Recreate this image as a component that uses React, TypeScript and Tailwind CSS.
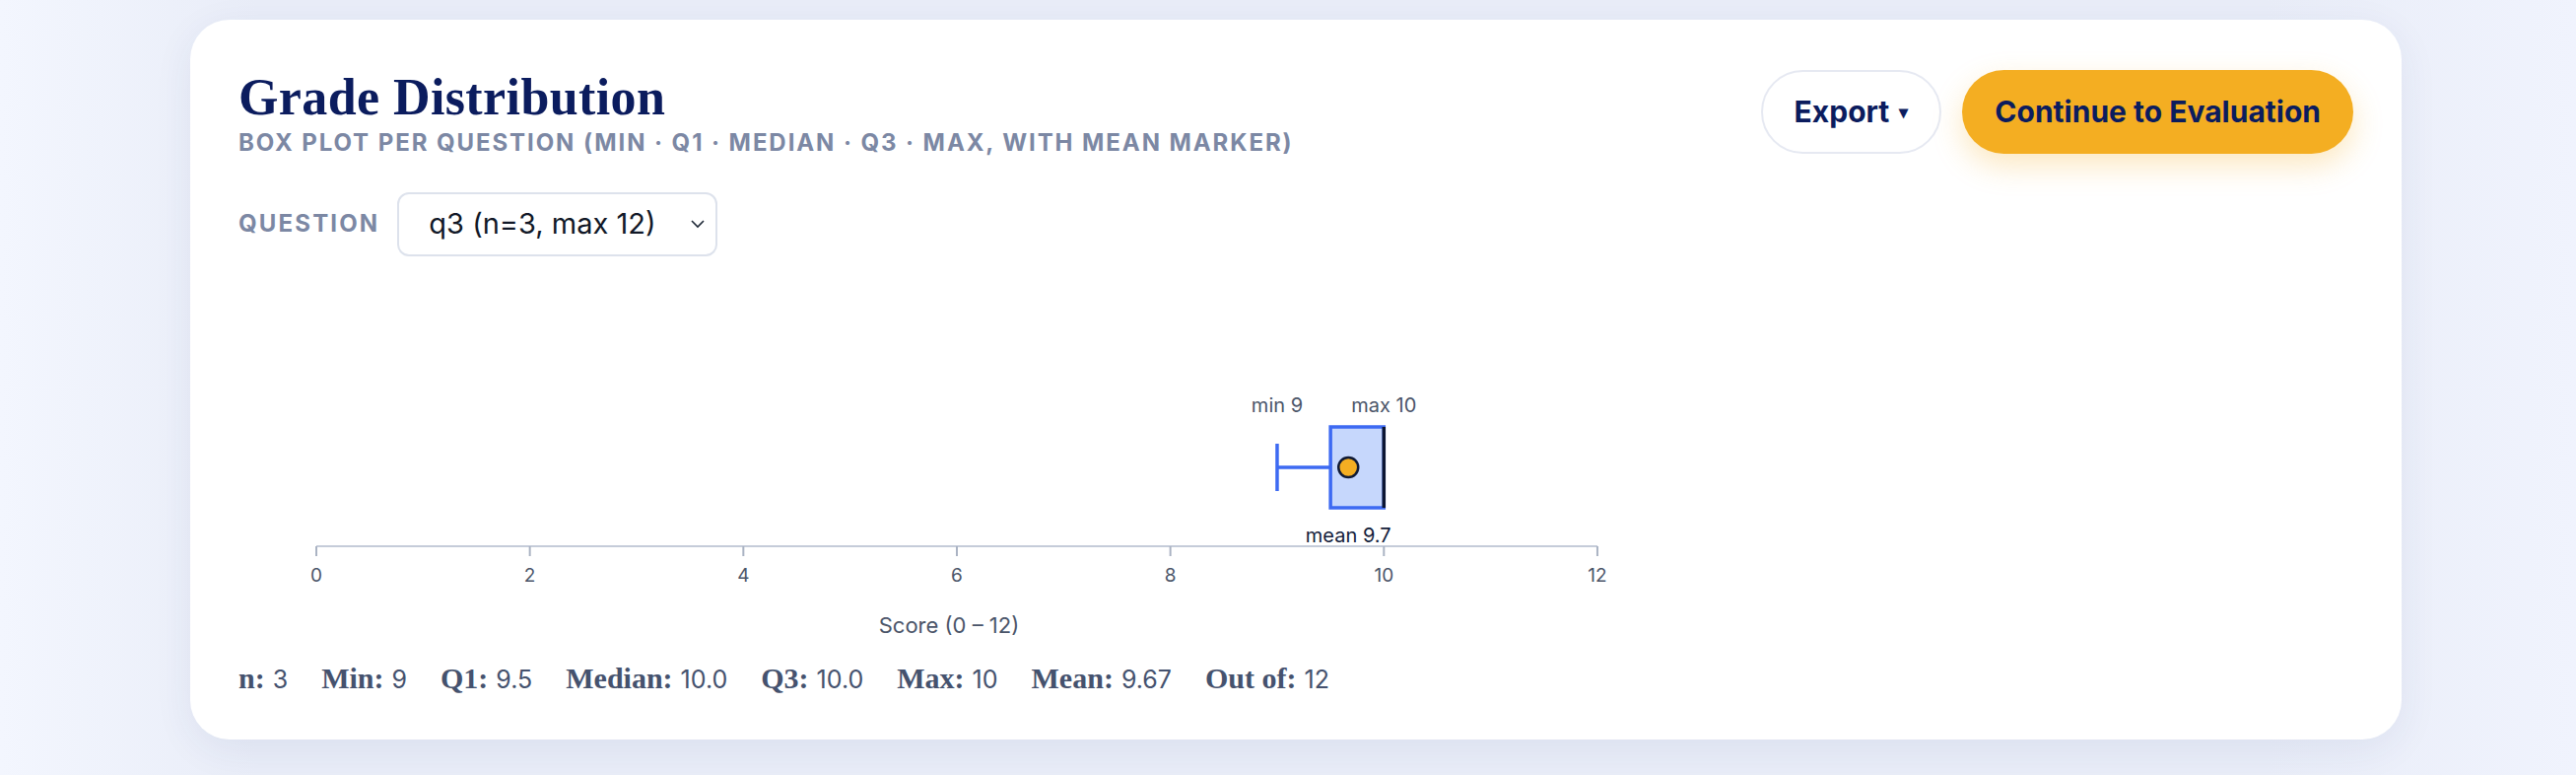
import React from 'react'

// box plot data for the selected question
const stats = { n: 3, min: 9, q1: 9.5, median: 10, q3: 10, max: 10, mean: 9.667, outOf: 12 }

const X0 = 79
const UNIT = 108.33
const x = (v: number) => X0 + v * UNIT

function BoxPlot() {
  const ticks = [0, 2, 4, 6, 8, 10, 12]
  const cy = 195
  return (
    <svg width={1400} height={380} className="block" style={{ fontFamily: 'Inter, sans-serif' }}>
      {/* axis */}
      <line x1={x(0)} x2={x(12)} y1={275} y2={275} stroke="#c5ccd9" strokeWidth={2} />
      {ticks.map((t) => (
        <g key={t}>
          <line x1={x(t)} x2={x(t)} y1={275} y2={285} stroke="#aab3c3" strokeWidth={2} />
          <text x={x(t)} y={311} textAnchor="middle" fontSize={19} fill="#4b5569">
            {t}
          </text>
        </g>
      ))}
      <text x={(x(0) + x(12)) / 2 - 8} y={363} textAnchor="middle" fontSize={22} fill="#4b5569">
        Score (0 – 12)
      </text>

      {/* whiskers */}
      <line x1={x(stats.min)} x2={x(stats.q1)} y1={cy} y2={cy} stroke="#3d6af2" strokeWidth={3.5} />
      <line x1={x(stats.min)} x2={x(stats.min)} y1={171} y2={219} stroke="#3d6af2" strokeWidth={3.5} />

      {/* box */}
      <rect
        x={x(stats.q1)}
        y={154}
        width={x(stats.q3) - x(stats.q1)}
        height={82}
        fill="#c6d7fc"
        stroke="#3d6af2"
        strokeWidth={3.5}
      />
      <line x1={x(stats.median)} x2={x(stats.median)} y1={154} y2={236} stroke="#0c1633" strokeWidth={3.5} />

      {/* mean marker */}
      <circle cx={x(stats.mean)} cy={cy} r={10} fill="#f4ae22" stroke="#0f1a36" strokeWidth={2.5} />

      <text x={x(stats.min)} y={139} textAnchor="middle" fontSize={20} fill="#4b5569">
        min 9
      </text>
      <text x={x(stats.max)} y={139} textAnchor="middle" fontSize={20} fill="#4b5569">
        max 10
      </text>
      <text x={x(stats.mean)} y={271} textAnchor="middle" fontSize={20} fill="#131c3a">
        mean 9.7
      </text>
    </svg>
  )
}

function Stat({ label, value }: { label: string; value: string }) {
  return (
    <span className="flex items-baseline">
      <span className="font-['Liberation_Serif',serif] text-[30px] font-bold">{label}:</span>
      <span className="ml-[8px] font-['Inter',sans-serif] text-[25px]">{value}</span>
    </span>
  )
}

export default function App() {
  return (
    <div className="min-h-screen w-full bg-[linear-gradient(90deg,#f3f6fe_0%,#e9edf8_10%,#e9edf8_88%,#f0f3fd_100%)] pt-[20px] pb-10">
      <div className="ml-[193px] w-[2244px] rounded-[40px] bg-white px-[49px] pt-[51px] pb-[40px] shadow-[0_10px_40px_rgba(40,60,120,0.07)]">
        {/* header */}
        <div className="flex items-start justify-between">
          <div className="pt-[1px]">
            <h1 className="font-['Liberation_Serif',serif] text-[52px] font-bold leading-[1.05] tracking-[0.4px] text-[#0b1c5e]">
              Grade Distribution
            </h1>
            <p className="mt-[6px] font-['Inter',sans-serif] text-[24px] font-bold uppercase leading-none tracking-[0.08em] text-[#7c88a4]">
              Box plot per question (min · Q1 · median · Q3 · max, with mean marker)
            </p>
          </div>
          <div className="flex items-center gap-[21px] font-['Inter',sans-serif]">
            <button className="flex h-[85px] items-center gap-[10px] rounded-full border-2 border-[#e6e9f2] bg-white px-[32px] text-[30px] font-bold text-[#0b1c5e]">
              Export <span className="text-[18px]">▾</span>
            </button>
            <button className="h-[85px] rounded-full bg-[#f4ae22] px-[33px] text-[30px] font-bold text-[#0b1c5e] shadow-[0_12px_30px_rgba(244,174,34,0.28)]">
              Continue to Evaluation
            </button>
          </div>
        </div>

        {/* question selector */}
        <div className="mt-[38px] flex items-center gap-[18px] font-['Inter',sans-serif]">
          <span className="text-[24px] font-bold uppercase tracking-[0.09em] text-[#7c88a4]">Question</span>
          <div className="relative">
            <select
              defaultValue="q3"
              className="h-[65px] w-[325px] appearance-none rounded-[12px] border-2 border-[#dde2ec] bg-white pl-[30px] text-[29px] text-[#111827] outline-none"
            >
              <option value="q1">q1 (n=3, max 10)</option>
              <option value="q2">q2 (n=3, max 8)</option>
              <option value="q3">q3 (n=3, max 12)</option>
            </select>
            <svg
              className="pointer-events-none absolute right-[12px] top-1/2 -translate-y-1/2"
              width="16"
              height="10"
              viewBox="0 0 16 10"
              fill="none"
            >
              <path d="M2 2l6 6 6-6" stroke="#1f2937" strokeWidth="1.6" />
            </svg>
          </div>
        </div>

        {/* chart */}
        <div className="mt-[19px]">
          <BoxPlot />
        </div>

        {/* summary */}
        <div className="mt-[6px] flex items-baseline gap-[34px] text-[#45526e]">
          <Stat label="n" value="3" />
          <Stat label="Min" value="9" />
          <Stat label="Q1" value="9.5" />
          <Stat label="Median" value="10.0" />
          <Stat label="Q3" value="10.0" />
          <Stat label="Max" value="10" />
          <Stat label="Mean" value="9.67" />
          <Stat label="Out of" value="12" />
        </div>
      </div>
    </div>
  )
}
